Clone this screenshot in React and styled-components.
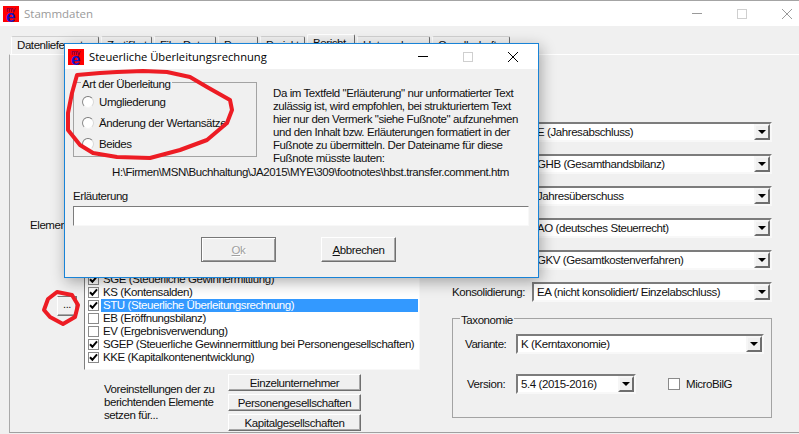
import React from "react";
import styled, { createGlobalStyle } from "styled-components";

const Global = createGlobalStyle`
  html, body { margin: 0; padding: 0; background: #f0f0f0; }
  body { font-family: "Liberation Sans", Arial, sans-serif; font-size: 11.5px; letter-spacing: -0.42px; color: #111; }
  * { box-sizing: border-box; }
  button { letter-spacing: inherit; }
`;

const Screen = styled.div`
  position: relative;
  width: 799px;
  height: 434px;
  overflow: hidden;
  background: #f0f0f0;
  border-top: 1px solid #a4a4a4;
`;

const TitleBar = styled.div`
  display: flex;
  align-items: center;
  height: ${p => p.$h || 25}px;
  padding: 0 ${p => p.$pr || 0}px 0 ${p => p.$pl || 3}px;
  background: #fff;
`;

const TitleText = styled.span`
  flex: 1;
  margin-left: ${p => p.$ml || 5}px;
  font-family: "Open Sans", "Noto Sans", sans-serif;
  font-size: ${p => p.$size || 12}px;
  letter-spacing: 0;
  color: ${p => p.$c || "#000"};
`;

const Controls = styled.div`
  display: flex;
  align-items: center;
  gap: ${p => p.$gap}px;
`;

const Minimize = styled.i`
  display: block;
  width: 10px;
  height: 1px;
  background: ${p => p.$c};
`;

const Maximize = styled.i`
  display: block;
  width: 10px;
  height: 10px;
  border: 1px solid #cfcfcf;
`;

const TabsRow = styled.div`
  display: flex;
  align-items: flex-end;
  height: 28px;
  padding-left: 11px;
  gap: 2px;
`;

const Tab = styled.div`
  width: ${p => p.$w}px;
  height: ${p => (p.$active ? 20 : 18)}px;
  padding: 2px 0 0 5px;
  border: 1px solid #fff;
  border-right-color: #6d6d6d;
  border-bottom: 0;
  border-top-color: ${p => (p.$active ? "#fff" : "#d0d0d0")};
  border-radius: 2px 2px 0 0;
  background: #f0f0f0;
  white-space: nowrap;
`;

const Pane = styled.div`
  display: flex;
  height: 379px;
  margin-left: 9px;
  border-top: 1px solid #fff;
  border-left: 1px solid #a9a9a9;
  border-bottom: 1px solid #a0a0a0;
`;

const LeftColumn = styled.div`
  width: 442px;
  padding-top: 163px;
`;

const ListArea = styled.div`
  display: grid;
  grid-template-columns: 74px 336px;
`;

const ListAside = styled.div`
  display: flex;
  flex-direction: column;
  align-items: flex-start;
`;

const ElementsLabel = styled.span`
  margin: 1px 0 0 20px;
  line-height: 13px;
`;

const DotsButton = styled.button`
  width: 20px;
  height: 20px;
  margin: 64px 0 0 47px;
  padding: 0 0 5px;
  border: 1px solid;
  border-color: #777 #777 #777 #fff;
  box-shadow: inset -1px -1px 0 #a8a8a8;
  background: #f0f0f0;
  font: 11px "Liberation Sans", sans-serif;
  color: #111;
`;

const ElementList = styled.div`
  height: 152px;
  padding: 2px 1px 0 2px;
  background: #fff;
  border: 1px solid;
  border-color: #7f7f7f #f8f8f8 #f8f8f8 #7f7f7f;
`;

const ListRow = styled.div`
  display: flex;
  align-items: center;
  height: 13px;
  padding-left: 1px;
`;

const CheckBoxMark = styled.span`
  flex: none;
  display: flex;
  align-items: center;
  justify-content: center;
  width: 11px;
  height: 11px;
  background: #fff;
  border: 1px solid #8a8a8a;
`;

const RowLabel = styled.span`
  flex: 1;
  margin-left: 2px;
  padding-left: 2px;
  height: 13px;
  line-height: 13px;
  white-space: nowrap;
  background: ${p => (p.$selected ? "#3399ff" : "transparent")};
  color: ${p => (p.$selected ? "#fff" : "#111")};
`;

const PresetRow = styled.div`
  display: flex;
  margin-top: 4px;
  padding-left: 94px;
`;

const PresetText = styled.div`
  width: 124px;
  padding-top: 9px;
  line-height: 13px;
`;

const PresetButtons = styled.div`
  display: flex;
  flex-direction: column;
  gap: 3px;
`;

const PresetButton = styled.button`
  width: 133px;
  height: 17px;
  padding: 0;
  border: 1px solid;
  border-color: #fff #6f6f6f #6f6f6f #fff;
  box-shadow: inset -1px -1px 0 #a8a8a8;
  background: #f0f0f0;
  font: 11.5px "Liberation Sans", sans-serif;
  color: #111;
`;

const RightColumn = styled.div`
  width: 320px;
  padding-top: 67px;
  display: flex;
  flex-direction: column;
  gap: 12px;
`;

const FieldRow = styled.div`
  display: flex;
  align-items: center;
`;

const FieldLabel = styled.span`
  flex: none;
  width: ${p => p.$w}px;
  padding-left: ${p => p.$pl || 0}px;
`;

const Combo = styled.div`
  display: flex;
  align-items: center;
  flex: ${p => (p.$w ? "none" : 1)};
  width: ${p => (p.$w ? `${p.$w}px` : "auto")};
  height: 20px;
  padding-left: ${p => p.$pl || 3}px;
  background: #fff;
  border: 2px solid;
  border-color: #7c7c7c #f8f8f8 #f8f8f8 #7c7c7c;
`;

const ComboText = styled.span`
  flex: 1;
  white-space: nowrap;
`;

const ComboArrow = styled.span`
  display: flex;
  align-items: center;
  justify-content: center;
  flex: none;
  width: 16px;
  height: 16px;
  background: #f0f0f0;
  border: 2px solid;
  border-color: #f6f6f6 #6e6e6e #6e6e6e #f6f6f6;
  &::after {
    content: "";
    border: 4px solid transparent;
    border-top: 4px solid #000;
    border-bottom: 0;
  }
`;

const TaxonomyGroup = styled.fieldset`
  height: 108px;
  margin: -4px 0 0;
  padding: 7px 7px 0 12px;
  border: 1px solid #a3a3a3;
  display: flex;
  flex-direction: column;
`;

const GroupLegend = styled.legend`
  margin-left: ${p => p.$ml}px;
  padding: 4px 1px 0;
  line-height: 13px;
`;

const VersionRow = styled(FieldRow)`
  margin-top: 20px;
`;

const MicroCheck = styled.label`
  display: flex;
  align-items: center;
  gap: 6px;
  margin-left: 32px;
`;

const SmallBox = styled.span`
  display: block;
  width: 12px;
  height: 12px;
  background: #fff;
  border: 1px solid #8a8a8a;
`;

const Dialog = styled.div`
  position: absolute;
  left: 64px;
  top: 42px;
  width: 475px;
  height: 235px;
  background: #f0f0f0;
  border: 1px solid #1883d7;
  box-shadow: 2px 4px 14px rgba(0, 0, 0, 0.32);
`;

const DialogBody = styled.div`
  padding: 5px 8px 0;
`;

const DialogTop = styled.div`
  display: flex;
`;

const ArtGroup = styled.fieldset`
  flex: none;
  width: 184px;
  height: 83px;
  margin: 0 16px 0 0;
  padding: 0 0 0 8px;
  border: 1px solid #a3a3a3;
  display: flex;
  flex-direction: column;
`;

const RadioRow = styled.label`
  display: flex;
  align-items: center;
  gap: 5px;
  height: 21px;
`;

const RadioMark = styled.span`
  display: block;
  width: 12px;
  height: 12px;
  border-radius: 50%;
  background: #fff;
  border: 1px solid;
  border-color: #7a7a7a #d8d8d8 #f4f4f4 #8a8a8a;
`;

const Notes = styled.div`
  flex: 1;
  padding-top: 13px;
  line-height: 13px;
  white-space: nowrap;
`;

const FilePath = styled.div`
  margin: 1px 0 0 39px;
  line-height: 13px;
  white-space: nowrap;
`;

const InputLabel = styled.div`
  margin-top: 11px;
  line-height: 13px;
`;

const CommentInput = styled.div`
  width: 456px;
  height: 20px;
  margin-top: 3px;
  background: #fff;
  border: 1px solid;
  border-color: #7c7c7c #f8f8f8 #f8f8f8 #7c7c7c;
`;

const DialogButtons = styled.div`
  display: flex;
  gap: 45px;
  margin-top: 11px;
  padding-left: 128px;
`;

const DialogButton = styled.button`
  width: 75px;
  height: 25px;
  padding: 0;
  border: 1px solid;
  border-color: ${p => (p.$disabled ? "#777" : "#fff #6f6f6f #6f6f6f #fff")};
  box-shadow: ${p => (p.$disabled ? "inset 1px 1px 0 #fff, inset -1px -1px 0 #9a9a9a" : "inset -1px -1px 0 #a8a8a8")};
  background: #f0f0f0;
  font: 11.5px "Liberation Sans", sans-serif;
  color: ${p => (p.$disabled ? "#a0a0a0" : "#111")};
  text-shadow: ${p => (p.$disabled ? "1px 1px 0 #fff" : "none")};
  u { text-decoration: underline; }
`;

const Annotations = styled.svg`
  position: absolute;
  left: 0;
  top: -1px;
  pointer-events: none;
`;

const Logo = () => (
  <svg width="16" height="16" viewBox="0 0 16 16">
    <rect width="16" height="16" fill="#f00" />
    <text x="3" y="6" fontSize="7" letterSpacing="0" fontFamily="Liberation Sans" fill="#500060">my</text>
    <text x="3" y="15.5" fontSize="17" letterSpacing="0" fontWeight="700" fontFamily="Liberation Sans" fill="#1414c8">e</text>
  </svg>
);

const CloseIcon = ({ size, color }) => (
  <svg width={size} height={size} viewBox="0 0 10 10">
    <path d="M0 0L10 10M10 0L0 10" stroke={color} strokeWidth="1" fill="none" />
  </svg>
);

const Check = () => (
  <svg width="9" height="9" viewBox="0 0 9 9">
    <path d="M1 4.2L3.4 6.8L8 1.4" stroke="#000" strokeWidth="2" fill="none" />
  </svg>
);

const items = [
  ["GCD (Stammdaten)", true],
  ["GAAP (Bilanz)", true],
  ["GuV (Gewinn und Verlust)", true],
  ["BAL (Bilanz)", true],
  ["SGE (Steuerliche Gewinnermittlung)", true],
  ["KS (Kontensalden)", true],
  ["STU (Steuerliche Überleitungsrechnung)", true, true],
  ["EB (Eröffnungsbilanz)", false],
  ["EV (Ergebnisverwendung)", false],
  ["SGEP (Steuerliche Gewinnermittlung bei Personengesellschaften)", true],
  ["KKE (Kapitalkontenentwicklung)", true],
];

const tabs = [
  ["Datenlieferant", 88], ["Zertifikat", 51], ["Filer Daten", 62], ["Person", 40],
  ["Projekt", 45], ["Bericht", 48, true], ["Unternehmen", 73], ["Gesellschaft", 78],
];

const combos = [
  ["Berichtsart:", "E (Jahresabschluss)"],
  ["Bilanzart:", "GHB (Gesamthandsbilanz)"],
  ["Bilanzierung:", "Jahresüberschuss"],
  ["Rechnung:", "AO (deutsches Steuerrecht)"],
  ["GuV-Format:", "GKV (Gesamtkostenverfahren)"],
  ["Konsolidierung:", "EA (nicht konsolidiert/ Einzelabschluss)"],
];

export default function App() {
  return (
    <Screen>
      <Global />
      <TitleBar $pr={7}>
        <Logo />
        <TitleText $c="#9a9a9a" $size={11.5}>Stammdaten</TitleText>
        <Controls $gap={35}>
          <Minimize $c="#9a9a9a" />
          <Maximize />
          <CloseIcon size={10} color="#9a9a9a" />
        </Controls>
      </TitleBar>
      <TabsRow>
        {tabs.map(([t, w, a]) => <Tab key={t} $w={w} $active={a}>{t}</Tab>)}
      </TabsRow>
      <Pane>
        <LeftColumn>
          <ListArea>
            <ListAside>
              <ElementsLabel>Elemente:</ElementsLabel>
              <DotsButton>...</DotsButton>
            </ListAside>
            <ElementList>
              {items.map(([t, c, s]) => (
                <ListRow key={t}>
                  <CheckBoxMark>{c && <Check />}</CheckBoxMark>
                  <RowLabel $selected={s}>{t}</RowLabel>
                </ListRow>
              ))}
            </ElementList>
          </ListArea>
          <PresetRow>
            <PresetText>Voreinstellungen der zu<br />berichtenden Elemente<br />setzen für...</PresetText>
            <PresetButtons>
              <PresetButton>Einzelunternehmer</PresetButton>
              <PresetButton>Personengesellschaften</PresetButton>
              <PresetButton>Kapitalgesellschaften</PresetButton>
            </PresetButtons>
          </PresetRow>
        </LeftColumn>
        <RightColumn>
          {combos.map(([l, v]) => (
            <FieldRow key={l}>
              <FieldLabel $w={80}>{l}</FieldLabel>
              <Combo>
                <ComboText>{v}</ComboText>
                <ComboArrow />
              </Combo>
            </FieldRow>
          ))}
          <TaxonomyGroup>
            <GroupLegend $ml={-5}>Taxonomie</GroupLegend>
            <FieldRow>
              <FieldLabel $w={51}>Variante:</FieldLabel>
              <Combo>
                <ComboText>K (Kerntaxonomie)</ComboText>
                <ComboArrow />
              </Combo>
            </FieldRow>
            <VersionRow>
              <FieldLabel $w={51} $pl={2}>Version:</FieldLabel>
              <Combo $w={120}>
                <ComboText>5.4 (2015-2016)</ComboText>
                <ComboArrow />
              </Combo>
              <MicroCheck><SmallBox />MicroBilG</MicroCheck>
            </VersionRow>
          </TaxonomyGroup>
        </RightColumn>
      </Pane>
      <Dialog>
        <TitleBar $pl={3} $pr={20}>
          <Logo />
          <TitleText $size={11.2}>Steuerliche Überleitungsrechnung</TitleText>
          <Controls $gap={35}>
            <Minimize $c="#000" />
            <Maximize />
            <CloseIcon size={10} color="#000" />
          </Controls>
        </TitleBar>
        <DialogBody>
          <DialogTop>
            <ArtGroup>
              <GroupLegend $ml={-1}>Art der Überleitung</GroupLegend>
              <RadioRow><RadioMark />Umgliederung</RadioRow>
              <RadioRow><RadioMark />Änderung der Wertansätze</RadioRow>
              <RadioRow><RadioMark />Beides</RadioRow>
            </ArtGroup>
            <Notes>
              Da im Textfeld "Erläuterung" nur unformatierter Text<br />
              zulässig ist, wird empfohlen, bei strukturiertem Text<br />
              hier nur den Vermerk "siehe Fußnote" aufzunehmen<br />
              und den Inhalt bzw. Erläuterungen formatiert in der<br />
              Fußnote zu übermitteln. Der Dateiname für diese<br />
              Fußnote müsste lauten:
            </Notes>
          </DialogTop>
          <FilePath>H:\Firmen\MSN\Buchhaltung\JA2015\MYE\309\footnotes\hbst.transfer.comment.htm</FilePath>
          <InputLabel>Erläuterung</InputLabel>
          <CommentInput />
          <DialogButtons>
            <DialogButton $disabled><u>O</u>k</DialogButton>
            <DialogButton><u>A</u>bbrechen</DialogButton>
          </DialogButtons>
        </DialogBody>
      </Dialog>
      <Annotations width="799" height="434" viewBox="0 0 799 434">
        <path d="M77 75 L100 73 L117 72 L143 71 L167 72 L190 77 L207 87 L230 100 L232 110 L227 123 L207 140 L180 150 L150 158 L117 157 L93 153 L80 145 L68 130 L68 113 L72 93 Z" fill="none" stroke="#ed1c24" strokeWidth="4" strokeLinejoin="round" />
        <path d="M57 292 L72 295 L78 305 L75 317 L63 324 L50 317 L44 310 L48 299 Z" fill="none" stroke="#ed1c24" strokeWidth="4" strokeLinejoin="round" />
      </Annotations>
    </Screen>
  );
}
